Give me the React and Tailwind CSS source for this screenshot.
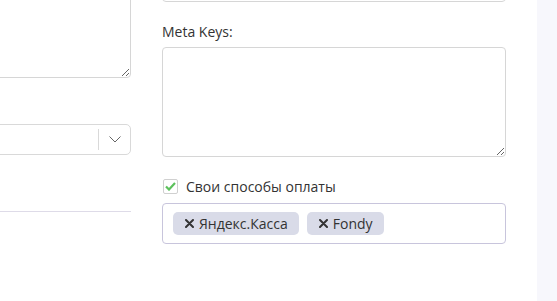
import React from "react";

const font = { fontFamily: '"Open Sans", "Noto Sans", sans-serif' };

const Tag = ({ label }) => (
    <span className="flex items-center gap-[5px] h-[23px] pl-[12px] pr-[11px] rounded-[5px] bg-[#d9dbe8] text-[14px] text-[#333] leading-none shrink-0">
        <svg width="9" height="9" viewBox="0 0 9 9" className="shrink-0">
            <path d="M1 1L8 8M8 1L1 8" stroke="#333" strokeWidth="2" strokeLinecap="round" />
        </svg>
        {label}
    </span>
);

const App = () => {
    return (
        <div className="w-[557px] h-[301px] overflow-hidden bg-white flex" style={font}>
            {/* Left column (cut off) */}
            <div className="w-[344px] ml-[-213px] shrink-0 flex flex-col">
                <textarea className="w-full h-[120px] mt-[-42px] border border-[#d6d6d6] rounded-[4px] resize-y outline-none" />
                <div className="mt-[46px] h-[31px] border border-[#d9d9d9] rounded-[5px] flex items-center justify-end">
                    <div className="w-px h-[21px] bg-[#d9d9d9]" />
                    <div className="w-[31px] flex justify-center">
                        <svg width="12" height="7" viewBox="0 0 12 7">
                            <path d="M0.5 0.5L6 6L11.5 0.5" stroke="#666" strokeWidth="1" fill="none" />
                        </svg>
                    </div>
                </div>
                <div className="mt-[56px] h-px bg-[#dedbe8]" />
            </div>

            {/* Right column */}
            <div className="w-[344px] ml-[31px] shrink-0 flex flex-col">
                <textarea className="w-full h-[60px] mt-[-58px] border border-[#d6d6d6] rounded-[4px] resize-y outline-none" />
                <label className="mt-[20px] text-[14px] text-[#333] leading-[19px]">Meta Keys:</label>
                <textarea className="mt-[6px] w-full h-[110px] border border-[#d6d6d6] rounded-[4px] resize-y outline-none" />
                <div className="mt-[20px] h-[19px] flex items-center gap-[8px] pl-[1px]">
                    <span className="w-[15px] h-[15px] border border-[#d0d0d0] rounded-[2px] flex items-center justify-center bg-white">
                        <svg width="11" height="9" viewBox="0 0 11 9">
                            <path d="M1 4.5L4 7.5L10 1" stroke="#5cc15c" strokeWidth="2.2" fill="none" />
                        </svg>
                    </span>
                    <span className="text-[14px] text-[#333] leading-[19px]">Свои способы оплаты</span>
                </div>
                <div className="mt-[7px] h-[41px] border border-[#c8c5dc] rounded-[4px] flex items-center gap-[8px] px-[10px]">
                    <Tag label="Яндекс.Касса" />
                    <Tag label="Fondy" />
                </div>
            </div>

            {/* Right side panel */}
            <div className="ml-[31px] flex-1 bg-[#f7f7fc]" />
        </div>
    );
};

export default App;
